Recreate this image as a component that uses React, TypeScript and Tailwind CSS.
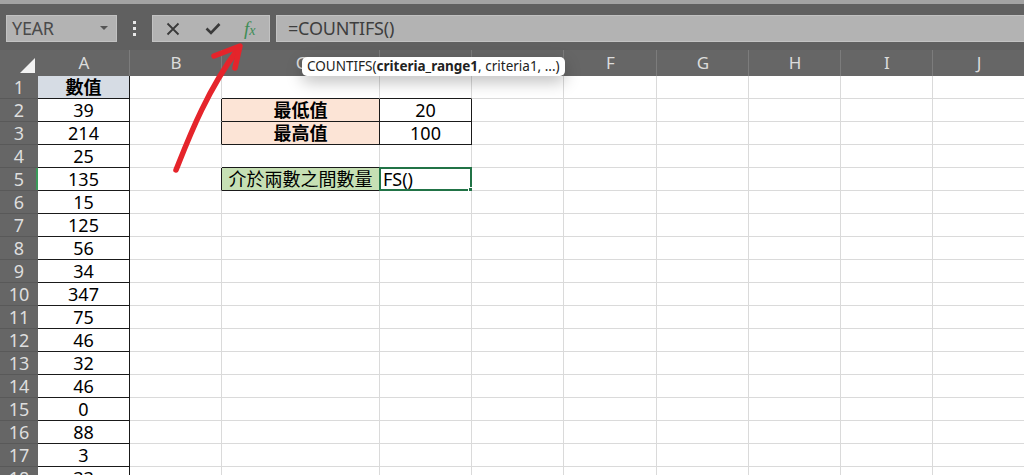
import React from "react";

const COLS = ["A", "B", "C", "D", "E", "F", "G", "H", "I", "J"];
const ROWS = Array.from({ length: 18 }, (_, i) => i + 1);

const colA = ["數值", "39", "214", "25", "135", "15", "125", "56", "34", "347", "75", "46", "32", "46", "0", "88", "3", "33"];

// cell content by "row:col"
const cells: Record<string, { text: string; bg?: string; bold?: boolean; left?: boolean }> = {
  "2:2": { text: "最低值", bg: "bg-[#fce4d6]", bold: true },
  "3:2": { text: "最高值", bg: "bg-[#fce4d6]", bold: true },
  "2:3": { text: "20" },
  "3:3": { text: "100" },
  "5:2": { text: "介於兩數之間數量", bg: "bg-[#c6e0b4]" },
  "5:3": { text: "FS()", left: true },
};

const boxed = (r: number, c: number) =>
  (c === 0 && r >= 1) ||
  ((c === 2 || c === 3) && (r === 2 || r === 3)) ||
  ((c === 2 || c === 3) && r === 5);

function GridCell({ r, c }: { r: number; c: number }) {
  const right = boxed(r, c) || boxed(r, c + 1);
  const bottom = boxed(r, c) || boxed(r + 1, c);
  let info = cells[`${r}:${c}`];
  if (c === 0) info = { text: colA[r - 1], bg: r === 1 ? "bg-[#d6dce4]" : undefined, bold: r === 1 };
  const selected = r === 5 && c === 3;
  return (
    <div
      className={`relative flex items-center h-[23px] border-r border-b text-[18px] text-black whitespace-nowrap ${
        right ? "border-r-[#1a1a1a]" : "border-r-[#dadada]"
      } ${bottom ? "border-b-[#1a1a1a]" : "border-b-[#dadada]"} ${info?.bg ?? "bg-white"} ${
        info?.left ? "justify-start pl-[3px]" : "justify-center"
      } ${info?.bold ? "font-bold" : ""}`}
    >
      {info?.text}
      {selected && (
        <div className="absolute -left-[1px] -top-[1px] -right-[1px] -bottom-[1px] border-2 border-[#217346]">
          <div className="absolute -right-[4px] -bottom-[4px] w-[6px] h-[6px] bg-[#217346] border border-white" />
        </div>
      )}
    </div>
  );
}

export default function App() {
  return (
    <div
      className="relative w-[1024px] h-[475px] overflow-hidden bg-[#606060]"
      style={{ fontFamily: '"Noto Sans", "Noto Sans CJK TC", sans-serif' }}
    >
      <div className="h-[4px] bg-[#a3a3a3]" />

      {/* formula bar */}
      <div className="h-[46px] flex items-start pt-[11px]">
        <div className="ml-[6px] w-[111px] h-[27px] bg-[#b3b3b3] border border-[#c2c2c2] flex items-center justify-between pl-[5px] pr-[8px]">
          <span className="text-[18px] text-[#4a4a4a] tracking-[-0.3px]">YEAR</span>
          <svg width="8" height="5" viewBox="0 0 8 5">
            <path d="M0 0 L8 0 L4 4 Z" fill="#555" />
          </svg>
        </div>
        <div className="w-[35px] h-[27px] flex flex-col items-center justify-center gap-[3px]">
          <span className="w-[3px] h-[3px] bg-[#e8e8e8]" />
          <span className="w-[3px] h-[3px] bg-[#e8e8e8]" />
          <span className="w-[3px] h-[3px] bg-[#e8e8e8]" />
        </div>
        <div className="w-[118px] h-[27px] bg-[#b3b3b3] border border-[#c2c2c2] flex items-center">
          <svg className="ml-[13px]" width="14" height="14" viewBox="0 0 14 14">
            <path d="M1.5 1.5 L12.5 12.5 M12.5 1.5 L1.5 12.5" stroke="#3a3a3a" strokeWidth="1.8" />
          </svg>
          <svg className="ml-[25px]" width="16" height="13" viewBox="0 0 16 13">
            <path d="M1.5 6.5 L6 11 L14.5 2" stroke="#3a3a3a" strokeWidth="2.6" fill="none" />
          </svg>
          <span className="ml-[23px] text-[19px] leading-none italic text-[#3f8d56]" style={{ fontFamily: '"Liberation Serif", serif' }}>
            f<span className="text-[14px]">x</span>
          </span>
        </div>
        <div className="ml-[6px] flex-1 h-[27px] bg-[#b3b3b3] border-l border-y border-[#c2c2c2] flex items-center pl-[11px]">
          <span className="text-[18px] text-[#3e3e3e] tracking-[-0.2px]">=COUNTIFS()</span>
        </div>
      </div>

      {/* sheet */}
      <div className="grid grid-cols-[38px_92px_92px_158px_92px_92px_93px_92px_92px_92px_92px]">
        <div className="h-[26px] bg-[#666666] relative">
          <svg className="absolute left-[20px] top-[8px]" width="15" height="15" viewBox="0 0 15 15">
            <path d="M15 0 L15 15 L0 15 Z" fill="#f2f2f2" />
          </svg>
        </div>
        {COLS.map((k) => (
          <div
            key={k}
            className="h-[26px] bg-[#666666] border-l border-[#7c7c7c] flex items-center justify-center text-[17px] text-[#dcdcdc] -ml-[1px] first:ml-0"
          >
            {k}
          </div>
        ))}
        {ROWS.map((r) => (
          <React.Fragment key={r}>
            <div
              className={`h-[23px] bg-[#666666] border-b border-[#595959] flex items-center justify-center text-[18px] text-[#dedede] ${
                r === 5 ? "shadow-[inset_-2px_0_0_#3a9a5a]" : ""
              }`}
            >
              {r}
            </div>
            {COLS.map((k, c) => (
              <GridCell key={k} r={r} c={c} />
            ))}
          </React.Fragment>
        ))}
      </div>

      {/* function tooltip */}
      <div className="absolute left-[302px] top-[57px] h-[19px] px-[5px] bg-white rounded-[5px] flex items-center text-[13.5px] text-[#222] whitespace-nowrap shadow-[0_6px_16px_rgba(0,0,0,0.25)]">
        COUNTIFS(<span className="font-bold">criteria_range1</span>, criteria1, ...)
      </div>

      {/* red arrow */}
      <svg className="absolute left-0 top-0 pointer-events-none" width="1024" height="475">
        <path d="M176 170 C 188 140, 206 92, 238 49" stroke="#e5242b" strokeWidth="5.5" fill="none" strokeLinecap="round" />
        <path d="M214 56 L240 46 L235 68" stroke="#e5242b" strokeWidth="5.5" fill="none" strokeLinecap="round" strokeLinejoin="round" />
      </svg>
    </div>
  );
}
